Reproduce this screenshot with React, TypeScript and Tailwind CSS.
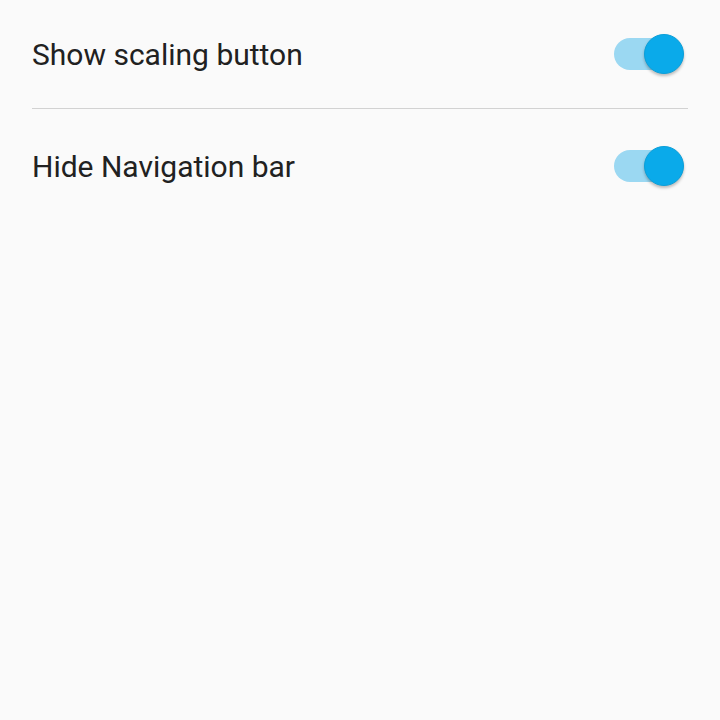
import React from "react";

function Toggle() {
  return (
    <div className="relative w-[70px] h-[42px] flex items-center">
      <div className="absolute left-0 w-[58px] h-[32px] rounded-full bg-[#9bd8f2]" />
      <div className="absolute right-0 w-[40px] h-[40px] rounded-full bg-[#0aaaea] border border-[#0b9fd9] shadow-[0_2px_3px_rgba(0,0,0,0.25)]" />
    </div>
  );
}

function Row({ label }: { label: string }) {
  return (
    <div className="h-[108px] flex items-center justify-between pl-[32px] pr-[36px]">
      <span className="text-[30px] text-[#212121]" style={{ fontFamily: "Roboto, sans-serif" }}>
        {label}
      </span>
      <Toggle />
    </div>
  );
}

export default function App() {
  return (
    <div className="w-[720px] h-[720px] bg-[#fafafa]">
      <Row label="Show scaling button" />
      <div className="mx-[32px] h-[1px] bg-[#d2d2d2]" />
      <div className="pt-[3px]">
        <Row label="Hide Navigation bar" />
      </div>
    </div>
  );
}
